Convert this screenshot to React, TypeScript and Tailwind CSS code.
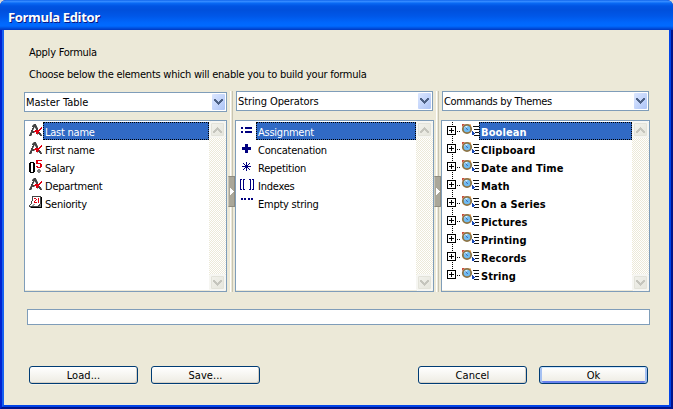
import React from "react";

const FACE = "font-['DejaVu_Sans_Condensed','DejaVu_Sans',sans-serif]";

type PixelProps = { rows: string[]; colors: Record<string, string>; className?: string };

/* Draws a bitmap glyph: one character of a row is one pixel. */
function Pixels({ rows, colors, className }: PixelProps) {
  const w = rows[0].length;
  return (
    <svg width={w} height={rows.length} shapeRendering="crispEdges" className={`block shrink-0 ${className ?? ""}`}>
      {rows.flatMap((row, y) =>
        row.split("").map((c, x) => (colors[c] ? <rect key={`${x}-${y}`} x={x} y={y} width="1" height="1" fill={colors[c]} /> : null)),
      )}
    </svg>
  );
}

const INK = { "#": "#000080", k: "#000000", g: "#444444", l: "#a0a0a0", r: "#e00010", w: "#ffffff", s: "#808080" };

const ALPHA = [
  "....lgg......",
  "...lgggl.....",
  "...ggggg.....",
  "....glggl...r",
  "...gg.lgg..rr",
  "...gl..gg.rr.",
  "..gg..rrrrr..",
  "..gggrrrrr...",
  ".lgggl.rrrg..",
  ".gg....rrggg.",
  "lgg.....l.ggl",
  "ggl........gg",
];
const NUM = [
  ".......rrrrrr",
  ".......rr....",
  ".kkkk..rr....",
  "kk..kk.rrrrr.",
  "kk..kk.....rr",
  "kk..kk.....rr",
  "kk..kk.rr..rr",
  "kk..kk..rrrr.",
  "kk..kk.......",
  "kk..kk...ss..",
  "kk..kk..ssss.",
  "kk..kk..ssss.",
  ".kkkk....ss..",
];
const DATE = [
  "...ggggggggg.",
  "...gwwwwwwwgk",
  "...gwrrwwrwgk",
  "...gwwwrwrwgk",
  "...gwwrwwrwgk",
  "..gwwrwwwrwgk",
  "..gwwrrrwrwgk",
  "..gwwwwwwwwgk",
  ".gwwllwwwwgsk",
  "gwwllwwwwggsk",
  "ggggggggggssk",
  ".skkkkkkkkkkk",
];
const ASSIGN = ["##..#######", "##..#######", "...........", "...........", "##..#######", "##..#######"];
const PLUS = ["...###...", "...###...", "...###...", "#########", "#########", "#########", "...###...", "...###...", "...###..."];
const STAR = ["....#....", ".#..#..#.", "..#.#.#..", "...###...", "#########", "...###...", "..#.#.#..", ".#..#..#.", "....#...."];
const BRACKETS = [
  "##.###..###.##",
  "#..#......#..#",
  "#..#......#..#",
  "#..#......#..#",
  "#..#......#..#",
  "#..#......#..#",
  "#..#......#..#",
  "#..#......#..#",
  "#..#......#..#",
  "#..#......#..#",
  "##.###..###.##",
].map((r) => r.replace("##.###", "##.##.").replace("###.##", ".##.##"));
const DOTS = ["##.##..##.##", "##.##..##.##"];
const CHEVRON = ["##.....##", "###...###", ".###.###.", "..#####..", "...###...", "....#...."];

function Combo({ label, className }: { label: string; className: string }) {
  return (
    <div className={`flex h-5 items-center border border-[#7f9db9] bg-white ${className}`}>
      <span className="flex-1 whitespace-nowrap pl-px pt-px">{label}</span>
      <span className="mr-px flex h-4 w-[13px] items-center justify-center rounded-[1px] bg-gradient-to-br from-[#dce7ff] to-[#adc4f6]">
        <Pixels rows={CHEVRON} colors={{ "#": "#4d6185" }} />
      </span>
    </div>
  );
}

function ScrollEnd({ up }: { up?: boolean }) {
  return (
    <div className="flex h-[17px] w-[17px] items-center justify-center rounded-[3px] border-2 border-[#f6f6f2] bg-gradient-to-br from-[#f2f2ec] to-[#e5e5dc] shadow-[inset_0_0_0_1px_#e3e3da]">
      <Pixels rows={CHEVRON} colors={{ "#": "#c5c5bd" }} className={up ? "rotate-180" : ""} />
    </div>
  );
}

function ListPanel({ children }: { children: React.ReactNode }) {
  return (
    <div className="mt-auto flex h-[172px] border border-[#7f9db9] bg-white">
      <div className="min-w-0 flex-1 border-b border-[#ece9d8] pt-px">{children}</div>
      <div className="flex w-[17px] flex-col justify-between bg-[repeating-conic-gradient(#ece9d8_0_25%,#ffffff_0_50%)] bg-[length:2px_2px]">
        <ScrollEnd up />
        <ScrollEnd />
      </div>
    </div>
  );
}

function Label({ text, selected, bold }: { text: string; selected: boolean; bold?: boolean }) {
  return (
    <div
      className={`flex h-[18px] flex-1 items-center whitespace-nowrap border border-dotted pl-px pt-[3px] ${bold ? "font-bold tracking-[0.1px]" : ""} ${
        selected ? "border-black bg-[#316ac5] text-white" : "border-transparent"
      }`}
    >
      {text}
    </div>
  );
}

function Splitter({ className }: { className: string }) {
  return (
    <div className={`flex flex-col items-center ${className}`}>
      <div className="w-[3px] flex-1 border-l border-r border-l-white border-r-[#c8c4b2]" />
      <div className="flex h-[31px] w-[7px] items-center justify-center border border-[#8f8c80] border-l-[#c9c6b9] bg-[#aaa799]">
        <Pixels rows={["w...", "ww..", "www.", "wwww", "www.", "ww..", "w..."]} colors={{ w: "#ffffff" }} />
      </div>
      <div className="w-[3px] flex-1 border-l border-r border-l-white border-r-[#c8c4b2]" />
    </div>
  );
}

function ThemeIcon() {
  return (
    <svg width="18" height="14" viewBox="0 0 18 14" className="block shrink-0">
      <circle cx="6" cy="6" r="4.200" fill="#6fbcf2" stroke="#8f7444" strokeWidth="1.800" />
      <path d="M3.800 5.200a3 3 0 0 1 2.600-1.800" stroke="#dcf4ff" strokeWidth="1.2" fill="none" />
      <path d="M4.500 4.500 6.800 7" stroke="#3f62a8" strokeWidth="1" />
      <path d="M1 1h3L1 4z" fill="#c9503c" />
      <path d="M8 1.500h2v2z" fill="#dd8a35" />
      <g shapeRendering="crispEdges">
        <path d="M12 3h6v1h-6zM13 6h5v1h-5zM14 9h4v1h-4zM13 12h5v1h-5z" fill="#111" />
        <path d="M11 8h1v1h1v1h1v1h-1v1h-2z" fill="#1646b4" />
      </g>
    </svg>
  );
}

function ThemeRow({ text, first, last }: { text: string; first: boolean; last: boolean }) {
  return (
    <div className="flex h-[18px]">
      <svg width="19" height="18" shapeRendering="crispEdges" className="block shrink-0">
        <path d="M10.500 0V4" stroke="#000" strokeDasharray="1 1" />
        {last ? null : <path d="M10.500 14V18" stroke="#000" strokeDasharray="1 1" />}
        <path d="M5.500 4.500h8v8h-8zM7 8.500h5M9.500 6v5" stroke="#000" fill="none" />
        <path d="M15 9.500h4" stroke="#000" strokeDasharray="1 1" />
      </svg>
      <div className="flex w-[18px] items-start pt-px">
        <ThemeIcon />
      </div>
      <Label text={text} selected={first} bold />
    </div>
  );
}

function PushButton({ label, primary, className }: { label: string; primary?: boolean; className?: string }) {
  return (
    <button
      className={`h-[18px] w-[109px] rounded-[3px] border border-[#003c74] bg-gradient-to-b from-white to-[#edebe2] text-center leading-[15px] tracking-[0.05px] ${
        primary ? "shadow-[inset_0_1px_#cee7ff,inset_2px_0_#a5c0f2,inset_-2px_0_#a5c0f2,inset_0_-2px_#6982ee]" : "shadow-[inset_-1px_-1px_#d6d0c5,0_1px_#f5f3ea]"
      } ${className ?? ""}`}
    >
      {label}
    </button>
  );
}

const FIELDS = [
  { text: "Last name", icon: ALPHA },
  { text: "First name", icon: ALPHA },
  { text: "Salary", icon: NUM },
  { text: "Department", icon: ALPHA },
  { text: "Seniority", icon: DATE },
];
const OPERATORS = [
  { text: "Assignment", icon: ASSIGN, pad: "pt-[5px]" },
  { text: "Concatenation", icon: PLUS, pad: "pt-[4px]" },
  { text: "Repetition", icon: STAR, pad: "pt-[4px]" },
  { text: "Indexes", icon: BRACKETS, pad: "pt-[3px]" },
  { text: "Empty string", icon: DOTS, pad: "pt-[4px]" },
];
const THEMES = ["Boolean", "Clipboard", "Date and Time", "Math", "On a Series", "Pictures", "Printing", "Records", "String"];

export default function App() {
  return (
    <div className="h-[409px] w-[673px] overflow-hidden bg-[#d8d8d8]">
      <div className={`flex h-full flex-col overflow-hidden rounded-t-[6px] bg-[#0019a8] text-[11px] leading-[14px] tracking-[-0.24px] text-black ${FACE}`}>
        <header className="flex h-[30px] shrink-0 items-center bg-[linear-gradient(to_bottom,#0058e6_0,#3a8cff_1px,#2b86ff_2px,#0a6bf5_3px,#0054e3_6px,#0050dc_10px,#0057e8_16px,#0068fd_23px,#006aff_26px,#0052e0_28px,#0038c0_30px)] pl-2 pt-[4px]">
          <h1 className="font-['Open_Sans',sans-serif] text-[13px] font-bold tracking-[-0.35px] text-white [text-shadow:1px_1px_#0a1883]">Formula Editor</h1>
        </header>
        <div className="flex flex-1 border-b-2 border-l-2 border-r-2 border-b-[#00138c] border-l-[#0023d0] border-r-[#00138c]">
          <main className="flex flex-1 flex-col border-b-2 border-l-2 border-r-2 border-b-[#0144e8] border-l-[#1660f0] border-r-[#0144e8] bg-[#ece9d8] pl-5">
            <p className="mt-4 pl-[5px]">Apply Formula</p>
            <p className="mt-2 whitespace-nowrap pl-[5px]">Choose below the elements which will enable you to build your formula</p>
            <div className="mt-[9px] flex h-[201px] shrink-0">
              <section className="flex w-[203px] flex-col">
                <Combo label="Master Table" className="mt-px tracking-normal" />
                <ListPanel>
                  {FIELDS.map((f, i) => (
                    <div key={f.text} className="flex h-[18px]">
                      <div className="w-[18px] pl-1 pt-[2px]">
                        <Pixels rows={f.icon} colors={INK} />
                      </div>
                      <Label text={f.text} selected={i === 0} />
                    </div>
                  ))}
                </ListPanel>
              </section>
              <Splitter className="w-2 pl-px" />
              <section className="flex w-[199px] flex-col">
                <Combo label="String Operators" className="mx-px tracking-[-0.1px]" />
                <ListPanel>
                  {OPERATORS.map((o, i) => (
                    <div key={o.text} className="flex h-[18px]">
                      <div className={`flex w-5 items-start justify-center pl-px ${o.pad}`}>
                        <Pixels rows={o.icon} colors={INK} />
                      </div>
                      <Label text={o.text} selected={i === 0} />
                    </div>
                  ))}
                </ListPanel>
              </section>
              <Splitter className="w-[7px]" />
              <section className="flex w-[209px] flex-col">
                <Combo label="Commands by Themes" className="mx-px tracking-[-0.33px]" />
                <ListPanel>
                  {THEMES.map((t, i) => (
                    <ThemeRow key={t} text={t} first={i === 0} last={i === THEMES.length - 1} />
                  ))}
                </ListPanel>
              </section>
            </div>
            <input className="ml-[3px] mt-[17px] block h-4 w-[623px] shrink-0 border border-[#7f9db9] bg-white" />
            <div className="ml-[5px] mt-[41px] flex w-[619px]">
              <PushButton label="Load..." />
              <PushButton label="Save..." className="ml-[13px]" />
              <PushButton label="Cancel" className="ml-auto" />
              <PushButton label="Ok" primary className="ml-3" />
            </div>
          </main>
        </div>
      </div>
    </div>
  );
}
